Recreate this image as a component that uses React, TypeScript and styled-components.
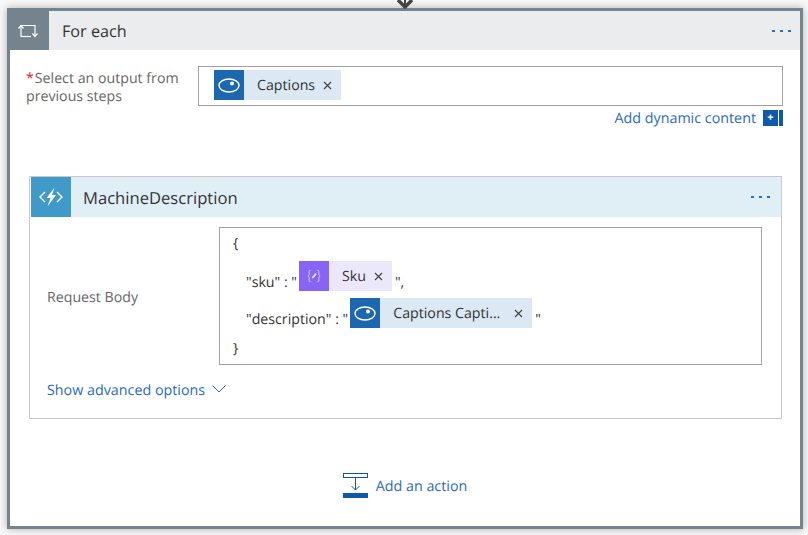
import React from 'react';
import styled, { createGlobalStyle } from 'styled-components';

const GlobalStyle = createGlobalStyle`
  html, body {
    margin: 0;
    padding: 0;
    background: #f8f8f8;
  }
  body {
    width: 808px;
    height: 535px;
    overflow: hidden;
    font-family: "Open Sans", "Liberation Sans", sans-serif;
    text-rendering: geometricPrecision;
  }
`;

const colors = {
  slate: '#75838f',
  link: '#2a6db5',
  dots: '#1e73c8',
  text: '#333',
  muted: '#666',
  field: '#a0a0a0',
  eye: '#1c67ad',
  eyeBg: '#dce8f3',
  variable: '#8764f4',
  variableBg: '#ece8fb',
  fn: '#3f9ac7',
  fnBg: '#e0eef5',
};

const Page = styled.div`
  position: relative;
  padding: 8px 5px 6px 7px;
`;

const TopArrow = styled.svg`
  position: absolute;
  left: 396px;
  top: 0;
`;

const Scope = styled.section`
  height: 521px;
  box-sizing: border-box;
  border: 3px solid ${colors.slate};
  background: #fff;
  box-shadow: 0 0 8px rgba(0, 0, 0, 0.3);
  display: flex;
  flex-direction: column;
`;

const Header = styled.header<{ $bg: string }>`
  display: flex;
  align-items: center;
  flex: none;
  background: ${(p) => p.$bg};
`;

const ScopeHeader = styled(Header)`
  height: 39px;
  margin-left: -3px;
`;

const ScopeIcon = styled.div`
  width: 42px;
  height: 39px;
  flex: none;
  background: ${colors.slate};
  display: flex;
  align-items: center;
  justify-content: center;
`;

const ActionHeader = styled(Header)`
  height: 40px;
  margin-left: 1px;
`;

const ActionIcon = styled.div`
  width: 40px;
  height: 40px;
  flex: none;
  background: ${colors.fn};
  display: flex;
  align-items: center;
  justify-content: center;
`;

const Title = styled.h2<{ $size: number; $gap: number }>`
  flex: 1;
  margin: 0 0 0 ${(p) => p.$gap}px;
  font-size: ${(p) => p.$size}px;
  font-weight: 400;
  color: ${colors.text};
`;

const Dots = styled.div<{ $right: number }>`
  display: flex;
  gap: 5px;
  margin-right: ${(p) => p.$right}px;
`;

const Dot = styled.span`
  width: 3px;
  height: 2px;
  background: ${colors.dots};
`;

const OutputRow = styled.div`
  display: flex;
  align-items: flex-start;
  margin: 16px 17px 0 16px;
`;

const Label = styled.label`
  width: 172px;
  flex: none;
  padding-top: 4px;
  font-size: 14.2px;
  line-height: 18px;
  color: ${colors.muted};
`;

const Required = styled.span`
  color: #e81123;
  margin-right: 1px;
`;

const OutputField = styled.div`
  flex: 1;
  height: 40px;
  box-sizing: border-box;
  border: 1px solid ${colors.field};
  padding: 3px 15px;
  display: flex;
  align-items: flex-start;
`;

const DynamicRow = styled.div`
  display: flex;
  justify-content: flex-end;
  align-items: center;
  gap: 7px;
  height: 16px;
  margin: 4px 17px 0 0;
`;

const LinkText = styled.span`
  font-size: 14.3px;
  line-height: 18px;
  padding-top: 2px;
  color: ${colors.link};
  white-space: nowrap;
`;

const DynamicIcon = styled.div`
  display: flex;
  gap: 1px;
  height: 16px;
`;

const DynamicPlus = styled.div`
  width: 15px;
  background: #0f58ac;
  color: #fff;
  font-size: 11px;
  font-weight: 700;
  line-height: 15px;
  text-align: center;
`;

const DynamicBar = styled.div`
  width: 4px;
  background: #0f58ac;
`;

const Action = styled.section`
  margin: 50px 18px 0 19px;
  height: 243px;
  box-sizing: border-box;
  border: 1px solid #c8c8c8;
  display: flex;
  flex-direction: column;
`;

const ActionBody = styled.div`
  display: flex;
  align-items: center;
  margin: 10px 19px 0 17px;
`;

const BodyLabel = styled.span`
  width: 172px;
  flex: none;
  padding-top: 2px;
  font-size: 14.2px;
  color: ${colors.muted};
`;

const BodyField = styled.div`
  flex: 1;
  height: 138px;
  box-sizing: border-box;
  border: 1px solid ${colors.field};
  padding: 5px 13px;
  font-size: 14.2px;
  color: ${colors.text};
`;

const CodeLine = styled.div<{ $height: number; $top?: number; $indent?: boolean }>`
  height: ${(p) => p.$height}px;
  margin-top: ${(p) => p.$top ?? 0}px;
  padding-left: ${(p) => (p.$indent ? 13 : 0)}px;
  display: flex;
  align-items: center;
  white-space: pre;
`;

const Token = styled.span<{ $bg: string }>`
  display: inline-flex;
  align-items: center;
  height: 30px;
  margin: 0 3px 0 2px;
  position: relative;
  top: -6px;
  background: ${(p) => p.$bg};
  color: ${colors.text};
  font-size: 14.2px;
`;

const FieldToken = styled(Token)`
  top: 0;
  margin: 0;
`;

const TokenIcon = styled.span<{ $bg: string }>`
  width: 30px;
  height: 30px;
  flex: none;
  background: ${(p) => p.$bg};
  display: flex;
  align-items: center;
  justify-content: center;
`;

const TokenLabel = styled.span<{ $gap: number; $width?: number }>`
  margin-left: 13px;
  margin-right: ${(p) => p.$gap}px;
  ${(p) => (p.$width ? `width: ${p.$width}px;` : '')}
  white-space: nowrap;
`;

const TokenClose = styled.svg`
  margin-right: 9px;
  flex: none;
`;

const Advanced = styled.div`
  display: flex;
  align-items: flex-start;
  gap: 7px;
  margin: 15px 0 0 17px;
`;

const Chevron = styled.svg`
  margin-top: 5px;
`;

const AddAction = styled.div`
  display: flex;
  align-items: center;
  justify-content: center;
  gap: 8px;
  margin-top: 54px;
`;

const EyeIcon = () => (
  <svg width="22" height="15" viewBox="0 0 22 15" fill="none">
    <ellipse cx="11" cy="7.500" rx="10" ry="6.500" stroke="#fff" strokeWidth="1.400" />
    <circle cx="14" cy="5.500" r="2" fill="#fff" />
  </svg>
);

const VariableIcon = () => (
  <svg width="16" height="14" viewBox="0 0 18 16" fill="none" stroke="#e4dcff" strokeWidth="1">
    <path d="M5 1.500C3 1.500 3.500 3 3.500 5S3.500 7 2 8C3.500 9 3.500 9 3.500 11S3 14.500 5 14.500" />
    <path d="M13 1.500C15 1.500 14.500 3 14.500 5S14.500 7 16 8C14.500 9 14.500 9 14.500 11S15 14.500 13 14.500" />
    <path d="M6.500 11L7 8.500L10.500 4.500L12.200 6L8.800 10Z" fill="#e4dcff" stroke="none" />
  </svg>
);

const CloseIcon = () => (
  <TokenClose width="9" height="9" viewBox="0 0 9 9" stroke="#444" strokeWidth="1.200">
    <path d="M1 1L8 8M8 1L1 8" />
  </TokenClose>
);

const App: React.FC = () => (
  <Page>
    <GlobalStyle />
    <TopArrow width="18" height="9" viewBox="0 0 18 9">
      <path d="M2 0L9 7L16 0" fill="none" stroke="#444" strokeWidth="3.500" />
      <path d="M9 0V6" fill="none" stroke="#444" strokeWidth="2" />
    </TopArrow>
    <Scope>
      <ScopeHeader $bg="#ebecee">
        <ScopeIcon>
          <svg width="20" height="16" viewBox="0 0 20 16" fill="none" stroke="#fff" strokeWidth="1.200">
            <path d="M3 14V2.500H17V13" />
            <path d="M0.500 5.500L3 2.500L5.500 5.500" />
            <path d="M3 13.500H13" />
            <path d="M14.500 10.500L17 13.500L19.500 10.500" />
          </svg>
        </ScopeIcon>
        <Title $size={16.2} $gap={13}>For each</Title>
        <Dots $right={9}>
          <Dot />
          <Dot />
          <Dot />
        </Dots>
      </ScopeHeader>
      <OutputRow>
        <Label>
          <Required>*</Required>Select an output from
          <br />
          previous steps
        </Label>
        <OutputField>
          <FieldToken $bg={colors.eyeBg}>
            <TokenIcon $bg={colors.eye}><EyeIcon /></TokenIcon>
            <TokenLabel $gap={8}>Captions</TokenLabel>
            <CloseIcon />
          </FieldToken>
        </OutputField>
      </OutputRow>
      <DynamicRow>
        <LinkText>Add dynamic content</LinkText>
        <DynamicIcon>
          <DynamicPlus>+</DynamicPlus>
          <DynamicBar />
        </DynamicIcon>
      </DynamicRow>
      <Action>
        <ActionHeader $bg={colors.fnBg}>
          <ActionIcon>
            <svg width="24" height="20" viewBox="0 0 24 20" fill="none">
              <path d="M6 5L1 10L6 15M18 5L23 10L18 15" stroke="#fff" strokeWidth="1.400" />
              <path d="M15.500 0.500L7.500 11H11.500L8.500 19.500L17 8H13Z" fill="#fff" />
            </svg>
          </ActionIcon>
          <Title $size={16.6} $gap={12}>MachineDescription</Title>
          <Dots $right={11}>
            <Dot />
            <Dot />
            <Dot />
          </Dots>
        </ActionHeader>
        <ActionBody>
          <BodyLabel>Request Body</BodyLabel>
          <BodyField>
            <CodeLine $height={21}>{'{'}</CodeLine>
            <CodeLine $height={38} $top={9} $indent>
              "sku" : "
              <Token $bg={colors.variableBg}>
                <TokenIcon $bg={colors.variable}><VariableIcon /></TokenIcon>
                <TokenLabel $gap={8}>Sku</TokenLabel>
                <CloseIcon />
              </Token>
              ",
            </CodeLine>
            <CodeLine $height={36} $indent>
              "description" : "
              <Token $bg={colors.eyeBg}>
                <TokenIcon $bg={colors.eye}><EyeIcon /></TokenIcon>
                <TokenLabel $gap={11} $width={110}>Captions Capti...</TokenLabel>
                <CloseIcon />
              </Token>
              "
            </CodeLine>
            <CodeLine $height={22}>{'}'}</CodeLine>
          </BodyField>
        </ActionBody>
        <Advanced>
          <LinkText>Show advanced options</LinkText>
          <Chevron width="14" height="8" viewBox="0 0 14 8" fill="none" stroke={colors.link}>
            <path d="M0.500 0.500L7 7L13.500 0.500" />
          </Chevron>
        </Advanced>
      </Action>
      <AddAction>
        <svg width="25" height="25" viewBox="0 0 25 25" fill="none">
          <rect x="0.500" y="0.500" width="24" height="4" stroke="#0f58ac" />
          <path d="M12.500 5V17M8.500 13L12.500 17L16.500 13" stroke="#0f58ac" />
          <rect y="20" width="25" height="5" fill="#0f58ac" />
        </svg>
        <LinkText>Add an action</LinkText>
      </AddAction>
    </Scope>
  </Page>
);

export default App;
